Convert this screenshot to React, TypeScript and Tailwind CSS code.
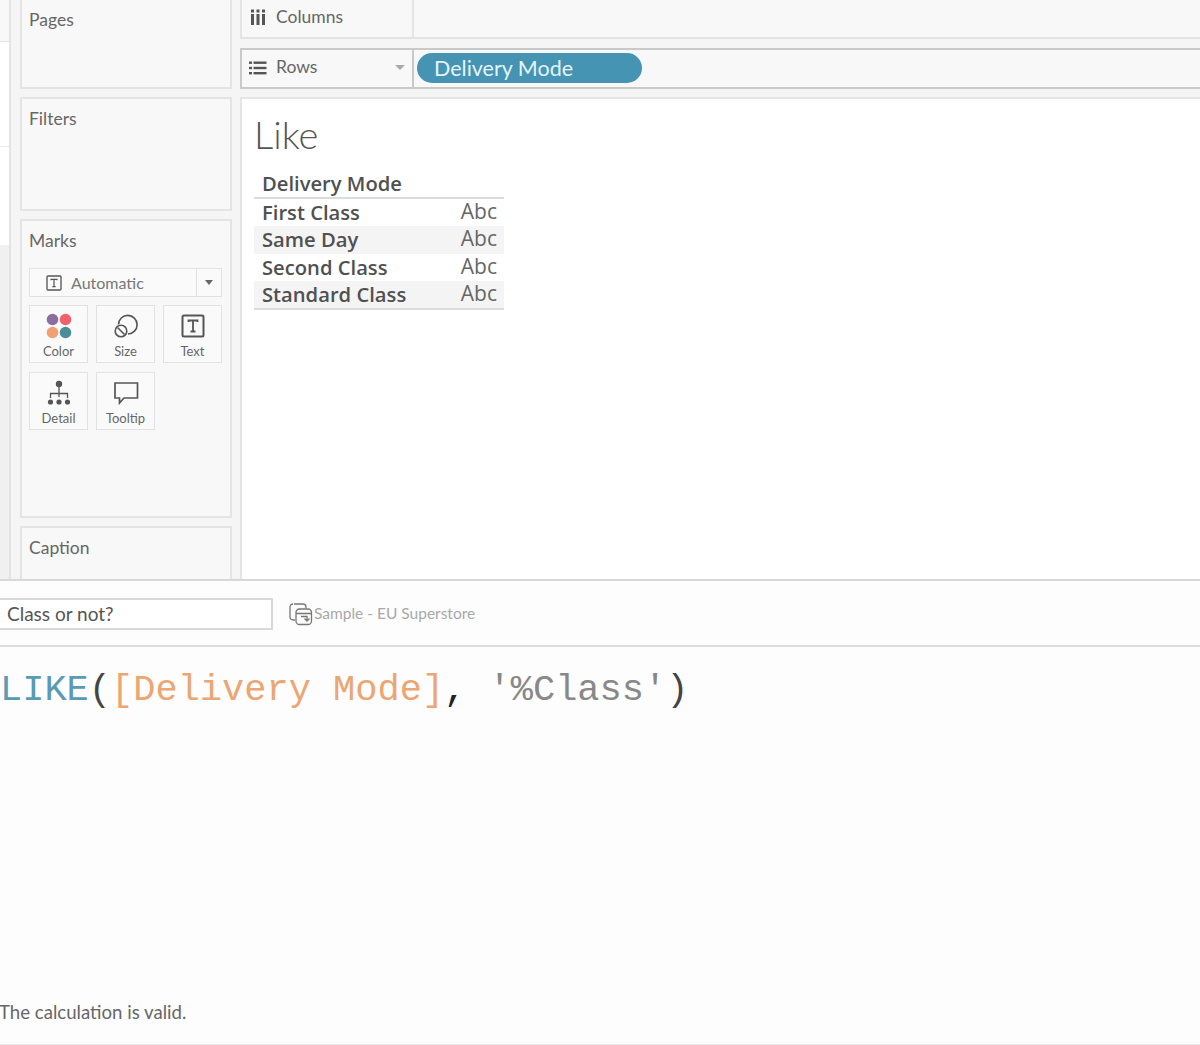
const lato = "font-['Lato','Open_Sans',sans-serif]";

function MarkButton({ label, children }: { label: string; children: React.ReactNode }) {
  return (
    <div className="w-[59px] h-[58px] border border-[#e1e1e1] bg-[#fafafa] flex flex-col items-center pt-[5px]">
      <div className="h-[30px] flex items-center justify-center">{children}</div>
      <span className="text-[13px] leading-[16px] mt-[2px] text-[#666]">{label}</span>
    </div>
  );
}

function SideCard({ title, className, children }: { title: string; className: string; children?: React.ReactNode }) {
  return (
    <div className={`border-2 border-[#e4e4e4] bg-[#f8f8f8] ${className}`}>
      <div className="text-[17.5px] leading-[20px] text-[#666] pl-[7px] pt-[10px]">{title}</div>
      {children}
    </div>
  );
}

function TextIcon({ size }: { size: number }) {
  return (
    <svg width={size} height={size} viewBox="0 0 24 24" fill="none" stroke="#555">
      <rect x="1.5" y="1.5" width="21" height="21" rx="1.5" strokeWidth="2" />
      <path d="M7.5 8V6.5h9V8M12 6.5v11M9.5 17.5h5" strokeWidth="1.8" />
    </svg>
  );
}

const rows = ["First Class", "Same Day", "Second Class", "Standard Class"];

export default function App() {
  return (
    <div className={`w-[1200px] h-[1045px] bg-[#fdfdfd] overflow-hidden ${lato}`}>
      <div className="h-[581px] flex border-b-2 border-[#d8d8d8] bg-[#f5f5f5]">
        {/* sliver of the data pane */}
        <div className="w-[11px] h-full border-r-2 border-[#e4e4e4] flex flex-col">
          <div className="h-[42px] bg-[#f8f8f8] border-b border-[#e4e4e4]" />
          <div className="h-[105px] bg-white border-b border-[#e9e9e9]" />
          <div className="h-[98px] bg-white" />
          <div className="flex-1 bg-[#f0f0f0]" />
        </div>

        <div className="w-[212px] ml-[9px] flex flex-col gap-[8px]">
          <SideCard title="Pages" className="h-[89px] border-t-0" />
          <SideCard title="Filters" className="h-[114px]" />
          <SideCard title="Marks" className="h-[299px]">
            <div className="ml-[7px] mt-[17px] w-[193px] h-[29px] border border-[#e1e1e1] bg-[#fafafa] flex items-center">
              <div className="flex-1 flex items-center pl-[16px] gap-[9px]">
                <TextIcon size={16} />
                <span className="text-[16px] text-[#777]">Automatic</span>
              </div>
              <div className="w-[25px] h-full border-l border-[#e1e1e1] flex items-center justify-center">
                <div className="w-0 h-0 border-x-[4px] border-x-transparent border-t-[5px] border-t-[#666]" />
              </div>
            </div>
            <div className="ml-[7px] mt-[8px] w-[193px] flex flex-wrap gap-x-[8px] gap-y-[9px]">
              <MarkButton label="Color">
                <svg width="26" height="26" viewBox="0 0 26 26">
                  <circle cx="6.5" cy="6.5" r="5.8" fill="#8c6d9f" />
                  <circle cx="19.5" cy="6.5" r="5.8" fill="#f0616d" />
                  <circle cx="6.5" cy="19.5" r="5.8" fill="#f2a071" />
                  <circle cx="19.5" cy="19.5" r="5.8" fill="#4e8d98" />
                </svg>
              </MarkButton>
              <MarkButton label="Size">
                <svg width="26" height="26" viewBox="0 0 26 26" fill="none" stroke="#555" strokeWidth="1.6">
                  <path d="M5.5 11.5A9.3 9.3 0 1 1 15 21" />
                  <circle cx="8" cy="18" r="5.8" />
                  <path d="M4.5 14.5l7 7" />
                </svg>
              </MarkButton>
              <MarkButton label="Text">
                <TextIcon size={24} />
              </MarkButton>
              <MarkButton label="Detail">
                <svg width="24" height="26" viewBox="0 0 24 26" fill="#555" stroke="#555">
                  <circle cx="12" cy="4" r="3.2" stroke="none" />
                  <path d="M12 7v10M3.5 18v-4.5h17V18" fill="none" strokeWidth="1.3" />
                  <circle cx="3.5" cy="22" r="2.6" stroke="none" />
                  <circle cx="12" cy="22" r="2.6" stroke="none" />
                  <circle cx="20.5" cy="22" r="2.6" stroke="none" />
                </svg>
              </MarkButton>
              <MarkButton label="Tooltip">
                <svg width="26" height="24" viewBox="0 0 26 24" fill="none" stroke="#555" strokeWidth="1.7">
                  <path d="M2 2h22.5v15H11l-4.5 5v-5H2z" />
                </svg>
              </MarkButton>
            </div>
          </SideCard>
          <SideCard title="Caption" className="flex-1 border-b-0" />
        </div>

        <div className="ml-[8px] flex-1 flex flex-col">
          <div className="h-[39px] flex border-b-2 border-l-2 border-[#e4e4e4] bg-[#f8f8f8]">
            <div className="w-[172px] border-r-2 border-[#e4e4e4] flex items-center pl-[8px] pb-[3px] text-[#666]">
              <svg width="16" height="16" viewBox="0 0 16 16" fill="#555">
                <rect x="1" y="5" width="3" height="11" />
                <rect x="6.5" y="5" width="3" height="11" />
                <rect x="12" y="5" width="3" height="11" />
                <rect x="1" y="0.5" width="3" height="3" />
                <rect x="6.5" y="0.5" width="3" height="3" />
                <rect x="12" y="0.5" width="3" height="3" />
              </svg>
              <span className="ml-[10px] text-[17.5px]">Columns</span>
            </div>
            <div className="flex-1" />
          </div>
          <div className="mt-[9px] h-[41px] flex border-y-2 border-l-2 border-[#c9c9c9] bg-[#f8f8f8]">
            <div className="w-[172px] border-r-2 border-[#c9c9c9] flex items-center pl-[7px] pb-[2px] text-[#666]">
              <svg width="18" height="14" viewBox="0 0 18 14" fill="#555">
                <rect x="0" y="0.5" width="3" height="2.4" />
                <rect x="0" y="5.8" width="3" height="2.4" />
                <rect x="0" y="11" width="3" height="2.4" />
                <rect x="4.5" y="0.5" width="13" height="2.4" />
                <rect x="4.5" y="5.8" width="13" height="2.4" />
                <rect x="4.5" y="11" width="13" height="2.4" />
              </svg>
              <span className="ml-[9px] text-[17.5px]">Rows</span>
              <div className="ml-auto mr-[7px] w-0 h-0 border-x-[5px] border-x-transparent border-t-[5px] border-t-[#aaa]" />
            </div>
            <div className="ml-[3px] mt-[3px] w-[225px] h-[30px] rounded-full bg-[#4594b4] pl-[17px] text-[21.5px] leading-[30px] text-[#e4f5fb]">
              Delivery Mode
            </div>
          </div>
          <div className="mt-[8px] flex-1 bg-white border-l-2 border-t-2 border-[#e4e4e4] pl-[12px]">
            <div className="text-[38px] leading-[42px] font-light text-[#555] mt-[14px]">Like</div>
            <div className="w-[250px] mt-[14px] text-[20.2px] font-semibold font-['Open_Sans',sans-serif] text-[#505050]">
              <div className="h-[30px] leading-[28px] pl-[8px] border-b-2 border-[#dcdcdc]">Delivery Mode</div>
              {rows.map((r, i) => (
                <div key={r} className={`h-[27.25px] leading-[27px] pl-[8px] pr-[7px] flex justify-between ${i % 2 === 1 ? "bg-[#f4f4f4]" : ""}`}>
                  <span>{r}</span>
                  <span className="font-normal text-[21px] text-[#666] -mt-[1px]">Abc</span>
                </div>
              ))}
              <div className="border-t-2 border-[#dcdcdc]" />
            </div>
          </div>
        </div>
      </div>

      {/* calculation editor */}
      <div className="h-[66px] flex items-center pt-[2px] border-b-2 border-[#dcdcdc]">
        <div className="-ml-[2px] w-[275px] h-[32px] border-2 border-[#d8d8d8] bg-white pl-[7px] text-[19px] leading-[28px] text-[#555]">
          Class or not?
        </div>
        <svg className="ml-[16px]" width="24" height="24" viewBox="0 0 24 24" fill="none" stroke="#777" strokeWidth="1.3">
          <path d="M5 2h9a3 3 0 0 1 3 3v1.5M6 18H4a3 3 0 0 1-3-3V5a3 3 0 0 1 3-3" />
          <rect x="7" y="7" width="15.5" height="15.5" rx="3.5" />
          <path d="M7 11.5h15.5M12 14.5h6v4M15.5 16.5l2.5 2.5 2.5-2.5" />
        </svg>
        <span className="ml-[1px] text-[15.5px] text-[#a8a8a8]">Sample - EU Superstore</span>
      </div>
      <div className="h-[353px] pt-[21px] font-['Liberation_Mono',monospace] text-[37px] leading-[44px] text-[#777] whitespace-pre">
        <span className="text-[#5a9ab5]">LIKE</span>
        <span className="text-[#444]">(</span>
        <span className="text-[#eba673]">[Delivery Mode]</span>
        <span className="text-[#222]">, </span>
        <span className="text-[#888]">'%Class'</span>
        <span className="text-[#444]">)</span>
      </div>
      <div className="text-[18.6px] leading-[24px] text-[#666] -ml-[1px]">The calculation is valid.</div>
      <div className="mt-[20px] border-t border-[#ececec]" />
    </div>
  );
}
